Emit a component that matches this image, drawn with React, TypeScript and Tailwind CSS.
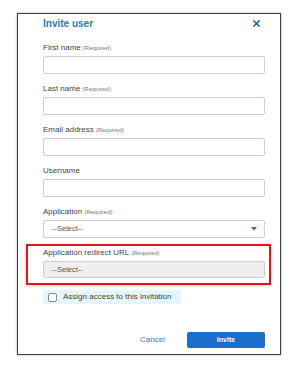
import { X } from "lucide-react";

const font = { fontFamily: '"Liberation Sans", Arial, sans-serif' };

function Label({ text, required }: { text: string; required?: boolean }) {
  return (
    <div className="h-[10px] leading-[10px] text-[8px] text-[#444] whitespace-nowrap mb-[3px]">
      {text}
      {required && <span className="text-[6px] text-[#777] ml-[2px]">(Required)</span>}
    </div>
  );
}

function Field({ label, required }: { label: string; required?: boolean }) {
  return (
    <div className="mb-[10px]">
      <Label text={label} required={required} />
      <div className="h-[18px] rounded-[2px] border border-[#cfcfcf] bg-white" />
    </div>
  );
}

export default function App() {
  return (
    <div className="w-[289px] h-[367px] bg-white pt-[13px] pl-[17px]" style={font}>
      <div className="w-[264px] h-[342px] border border-[#3f3f3f] bg-white shadow-[0_0_2px_rgba(0,0,0,0.35)] pl-[25px] pr-[15px] flex flex-col">
        {/* HEADER */}
        <div className="flex items-center justify-between h-[18px] mb-[11px]">
          <h1 className="text-[10px] font-bold text-[#2a7ad0]">Invite user</h1>
          <X size={11} strokeWidth={3.2} className="text-[#1f5ea8] mr-[3px]" />
        </div>

        <Field label="First name" required />
        <Field label="Last name" required />
        <Field label="Email address" required />
        <Field label="Username" />

        {/* APPLICATION */}
        <div>
          <Label text="Application" required />
          <div className="h-[18px] rounded-[2px] border border-[#cfcfcf] bg-white flex items-center justify-between pl-[8px] pr-[7px]">
            <span className="text-[7.5px] text-[#555]">--Select--</span>
            <svg width="6" height="4" viewBox="0 0 6 4">
              <path d="M0 0 L6 0 L3 3.5 Z" fill="#2a6fc0" />
            </svg>
          </div>
        </div>

        {/* REDIRECT URL (highlighted) */}
        <div className="mt-[6px] -ml-[17px] -mr-[6px] border-2 border-[#e8121a] pt-[2px] pb-[5px] pl-[15px] pr-[4px] shadow-[0_1px_3px_rgba(0,0,0,0.2)]">
          <Label text="Application redirect URL" required />
          <div className="h-[17px] rounded-[2px] border border-[#cfcfcf] bg-[#efefef] flex items-center pl-[8px]">
            <span className="text-[7.5px] text-[#555]">--Select--</span>
          </div>
        </div>

        {/* CHECKBOX */}
        <div className="mt-[5px] w-[138px] h-[14px] bg-[#e4f6fa] flex items-center pl-[5px]">
          <div className="w-[9px] h-[9px] rounded-[2px] border border-[#8a8a8a] bg-white" />
          <span className="ml-[6px] text-[8px] text-[#444] whitespace-nowrap">Assign access to this invitation</span>
        </div>

        {/* ACTIONS */}
        <div className="mt-[28px] flex items-center justify-end">
          <button className="text-[8px] text-[#3a78b8] mr-[22px]">Cancel</button>
          <button className="w-[78px] h-[16px] rounded-[2px] bg-[#1a6fcc] text-white text-[7px] font-bold">
            Invite
          </button>
        </div>
      </div>
    </div>
  );
}
